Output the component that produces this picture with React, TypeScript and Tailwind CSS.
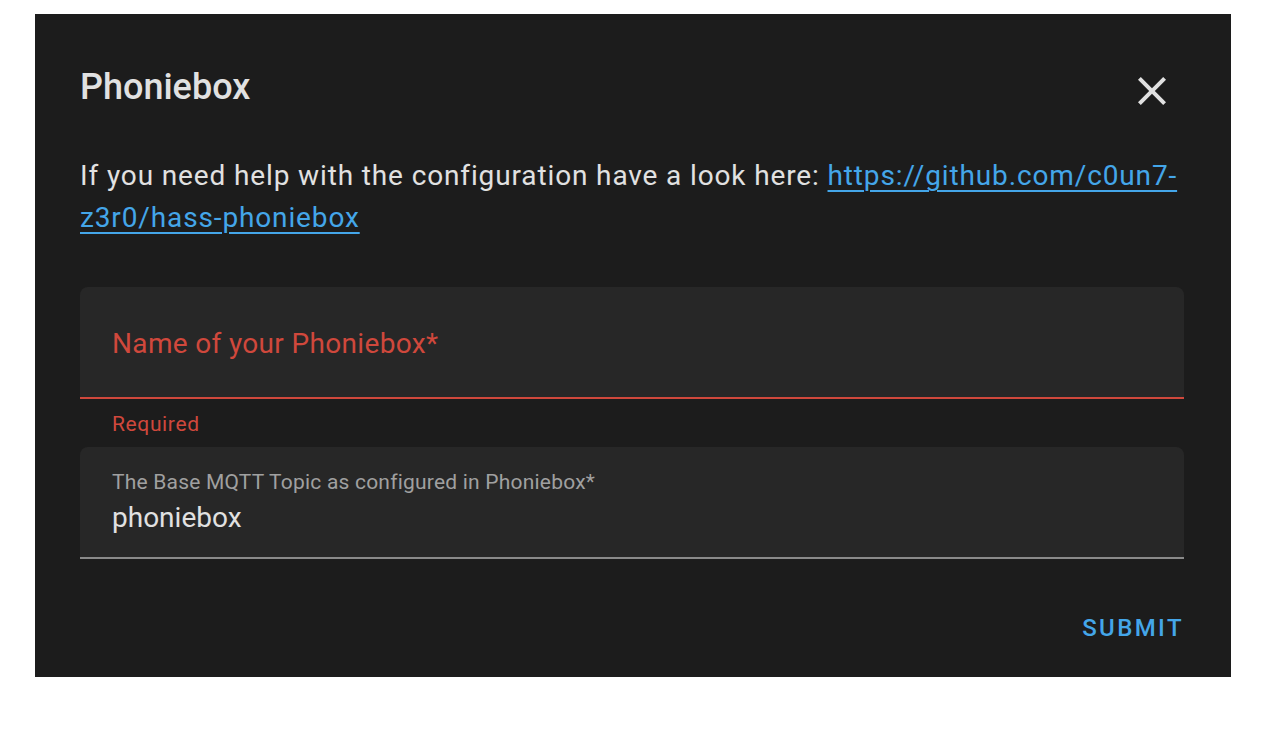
import React from "react";

export default function App() {
  return (
    <div className="w-[1266px] h-[740px] bg-white pt-[14px] pl-[35px]" style={{ fontFamily: "Roboto, 'Noto Sans', sans-serif" }}>
      <div className="w-[1196px] h-[663px] bg-[#1c1c1c] pl-[45px] pr-[47px] pt-[52px] flex flex-col">
        <div className="flex items-center justify-between h-[42px]">
          <h2 className="text-[36px] leading-[42px] font-medium text-[#e1e1e1]">Phoniebox</h2>
          <button className="w-[48px] h-[48px] mr-[8px] mt-[8px] flex items-center justify-center text-[#e1e1e1]">
            <svg viewBox="0 0 24 24" width="48" height="48" fill="currentColor">
              <path d="M19,6.41L17.59,5L12,10.59L6.41,5L5,6.41L10.59,12L5,17.59L6.41,19L12,13.41L17.59,19L19,17.59L13.41,12L19,6.41Z" />
            </svg>
          </button>
        </div>
        <p className="mt-[47px] text-[28px] leading-[42px] tracking-[0.031em] text-[#e1e1e1]">
          If you need help with the configuration have a look here:{" "}
          <a className="text-[#44a6e9] underline underline-offset-[5px] decoration-[1.5px]" href="#">
            https://github.com/c0un7-z3r0/hass-phoniebox
          </a>
        </p>
        <div className="mt-[48px] h-[112px] bg-[#272727] rounded-t-[8px] border-b-2 border-[#d0483c] flex items-center px-[32px] pt-[4px]">
          <span className="text-[28px] text-[#d0483c] tracking-[0.012em]">Name of your Phoniebox*</span>
        </div>
        <div className="h-[48px] px-[32px] pt-[3px] flex items-center">
          <span className="text-[21px] text-[#d0483c] tracking-[0.03em]">Required</span>
        </div>
        <div className="h-[112px] bg-[#272727] rounded-t-[8px] border-b-2 border-[#8a8a8a] flex flex-col px-[32px] pt-[20px]">
          <span className="text-[21px] leading-[30px] text-[#a0a0a0] tracking-[0.01em]">The Base MQTT Topic as configured in Phoniebox*</span>
          <span className="text-[28px] leading-[40px] text-[#e1e1e1] mt-[1px]">phoniebox</span>
        </div>
        <div className="flex justify-end mt-[51px]">
          <button className="text-[24px] font-medium tracking-[0.1em] text-[#44a6e9] leading-[36px]">SUBMIT</button>
        </div>
      </div>
    </div>
  );
}
